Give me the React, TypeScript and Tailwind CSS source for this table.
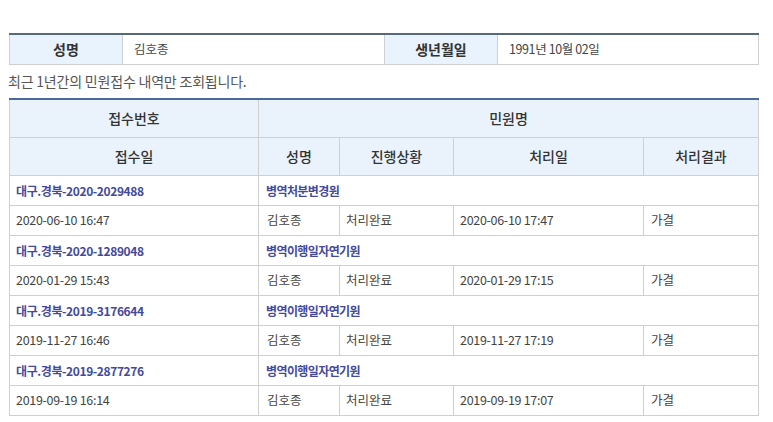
import React from "react";

const rows = [
  { no: "대구.경북-2020-2029488", title: "병역처분변경원", date: "2020-06-10 16:47", name: "김호종", status: "처리완료", done: "2020-06-10 17:47", result: "가결" },
  { no: "대구.경북-2020-1289048", title: "병역이행일자연기원", date: "2020-01-29 15:43", name: "김호종", status: "처리완료", done: "2020-01-29 17:15", result: "가결" },
  { no: "대구.경북-2019-3176644", title: "병역이행일자연기원", date: "2019-11-27 16:46", name: "김호종", status: "처리완료", done: "2019-11-27 17:19", result: "가결" },
  { no: "대구.경북-2019-2877276", title: "병역이행일자연기원", date: "2019-09-19 16:14", name: "김호종", status: "처리완료", done: "2019-09-19 17:07", result: "가결" },
];

const font = { fontFamily: '"Noto Sans CJK KR", "Noto Sans", sans-serif' };

export default function App() {
  return (
    <div className="w-[773px] h-[422px] bg-white overflow-hidden" style={font}>
      <div className="pl-[9px] pt-[33px]">
        <table className="w-[749px] table-fixed border-collapse border-t-2 border-t-[#57697a]">
          <colgroup>
            <col className="w-[113px]" />
            <col className="w-[262px]" />
            <col className="w-[113px]" />
            <col className="w-[261px]" />
          </colgroup>
          <tbody>
            <tr className="h-[30px]">
              <th className="bg-[#e9f3fd] border border-[#cfcfcf] border-t-0 text-[14px] font-bold text-[#333] text-center">성명</th>
              <td className="border border-[#cfcfcf] border-t-0 text-[12.5px] text-[#444] pl-[11px]">김호종</td>
              <th className="bg-[#e9f3fd] border border-[#cfcfcf] border-t-0 text-[14px] font-bold text-[#333] text-center">생년월일</th>
              <td className="border border-[#cfcfcf] border-t-0 text-[12.5px] text-[#444] pl-[11px] tracking-[-0.4px]">1991년 10월 02일</td>
            </tr>
          </tbody>
        </table>
        <p className="text-[14px] text-[#555] leading-[16px] mt-[8px] -ml-[1px] tracking-[-0.2px]">최근 1년간의 민원접수 내역만 조회됩니다.</p>
        <table className="w-[749px] table-fixed border-collapse border-t-2 border-t-[#4a6b9a] mt-[9px]">
          <colgroup>
            <col className="w-[249px]" />
            <col className="w-[81px]" />
            <col className="w-[114px]" />
            <col className="w-[190px]" />
            <col className="w-[115px]" />
          </colgroup>
          <thead>
            <tr className="h-[39px]">
              <th className="bg-[#eaf3fc] border border-[#cfcfcf] border-t-0 text-[14px] font-medium text-[#333]">접수번호</th>
              <th colSpan={4} className="bg-[#eaf3fc] border border-[#cfcfcf] border-t-0 text-[14px] font-medium text-[#333]">민원명</th>
            </tr>
            <tr className="h-[38px]">
              <th className="bg-[#eaf3fc] border border-[#cfcfcf] text-[14px] font-medium text-[#333]">접수일</th>
              <th className="bg-[#eaf3fc] border border-[#cfcfcf] text-[14px] font-medium text-[#333]">성명</th>
              <th className="bg-[#eaf3fc] border border-[#cfcfcf] text-[14px] font-medium text-[#333]">진행상황</th>
              <th className="bg-[#eaf3fc] border border-[#cfcfcf] text-[14px] font-medium text-[#333]">처리일</th>
              <th className="bg-[#eaf3fc] border border-[#cfcfcf] text-[14px] font-medium text-[#333]">처리결과</th>
            </tr>
          </thead>
          <tbody>
            {rows.map((r) => (
              <React.Fragment key={r.no}>
                <tr className="h-[30px]">
                  <td className="border border-[#cfcfcf] pl-[6px] text-[12px] font-bold tracking-[-0.4px] text-[#434a9c]">{r.no}</td>
                  <td colSpan={4} className="border border-[#cfcfcf] pl-[7px] text-[12px] font-bold tracking-[-0.6px] text-[#434a9c]">{r.title}</td>
                </tr>
                <tr className="h-[30px]">
                  <td className="border border-[#cfcfcf] pl-[6px] text-[12.5px] tracking-[-0.3px] text-[#444]">{r.date}</td>
                  <td className="border border-[#cfcfcf] pl-[8px] text-[12.5px] text-[#444]">{r.name}</td>
                  <td className="border border-[#cfcfcf] pl-[6px] text-[12.5px] text-[#444]">{r.status}</td>
                  <td className="border border-[#cfcfcf] pl-[6px] text-[12.5px] tracking-[-0.3px] text-[#444]">{r.done}</td>
                  <td className="border border-[#cfcfcf] pl-[7px] text-[12.5px] text-[#444]">{r.result}</td>
                </tr>
              </React.Fragment>
            ))}
          </tbody>
        </table>
      </div>
    </div>
  );
}
